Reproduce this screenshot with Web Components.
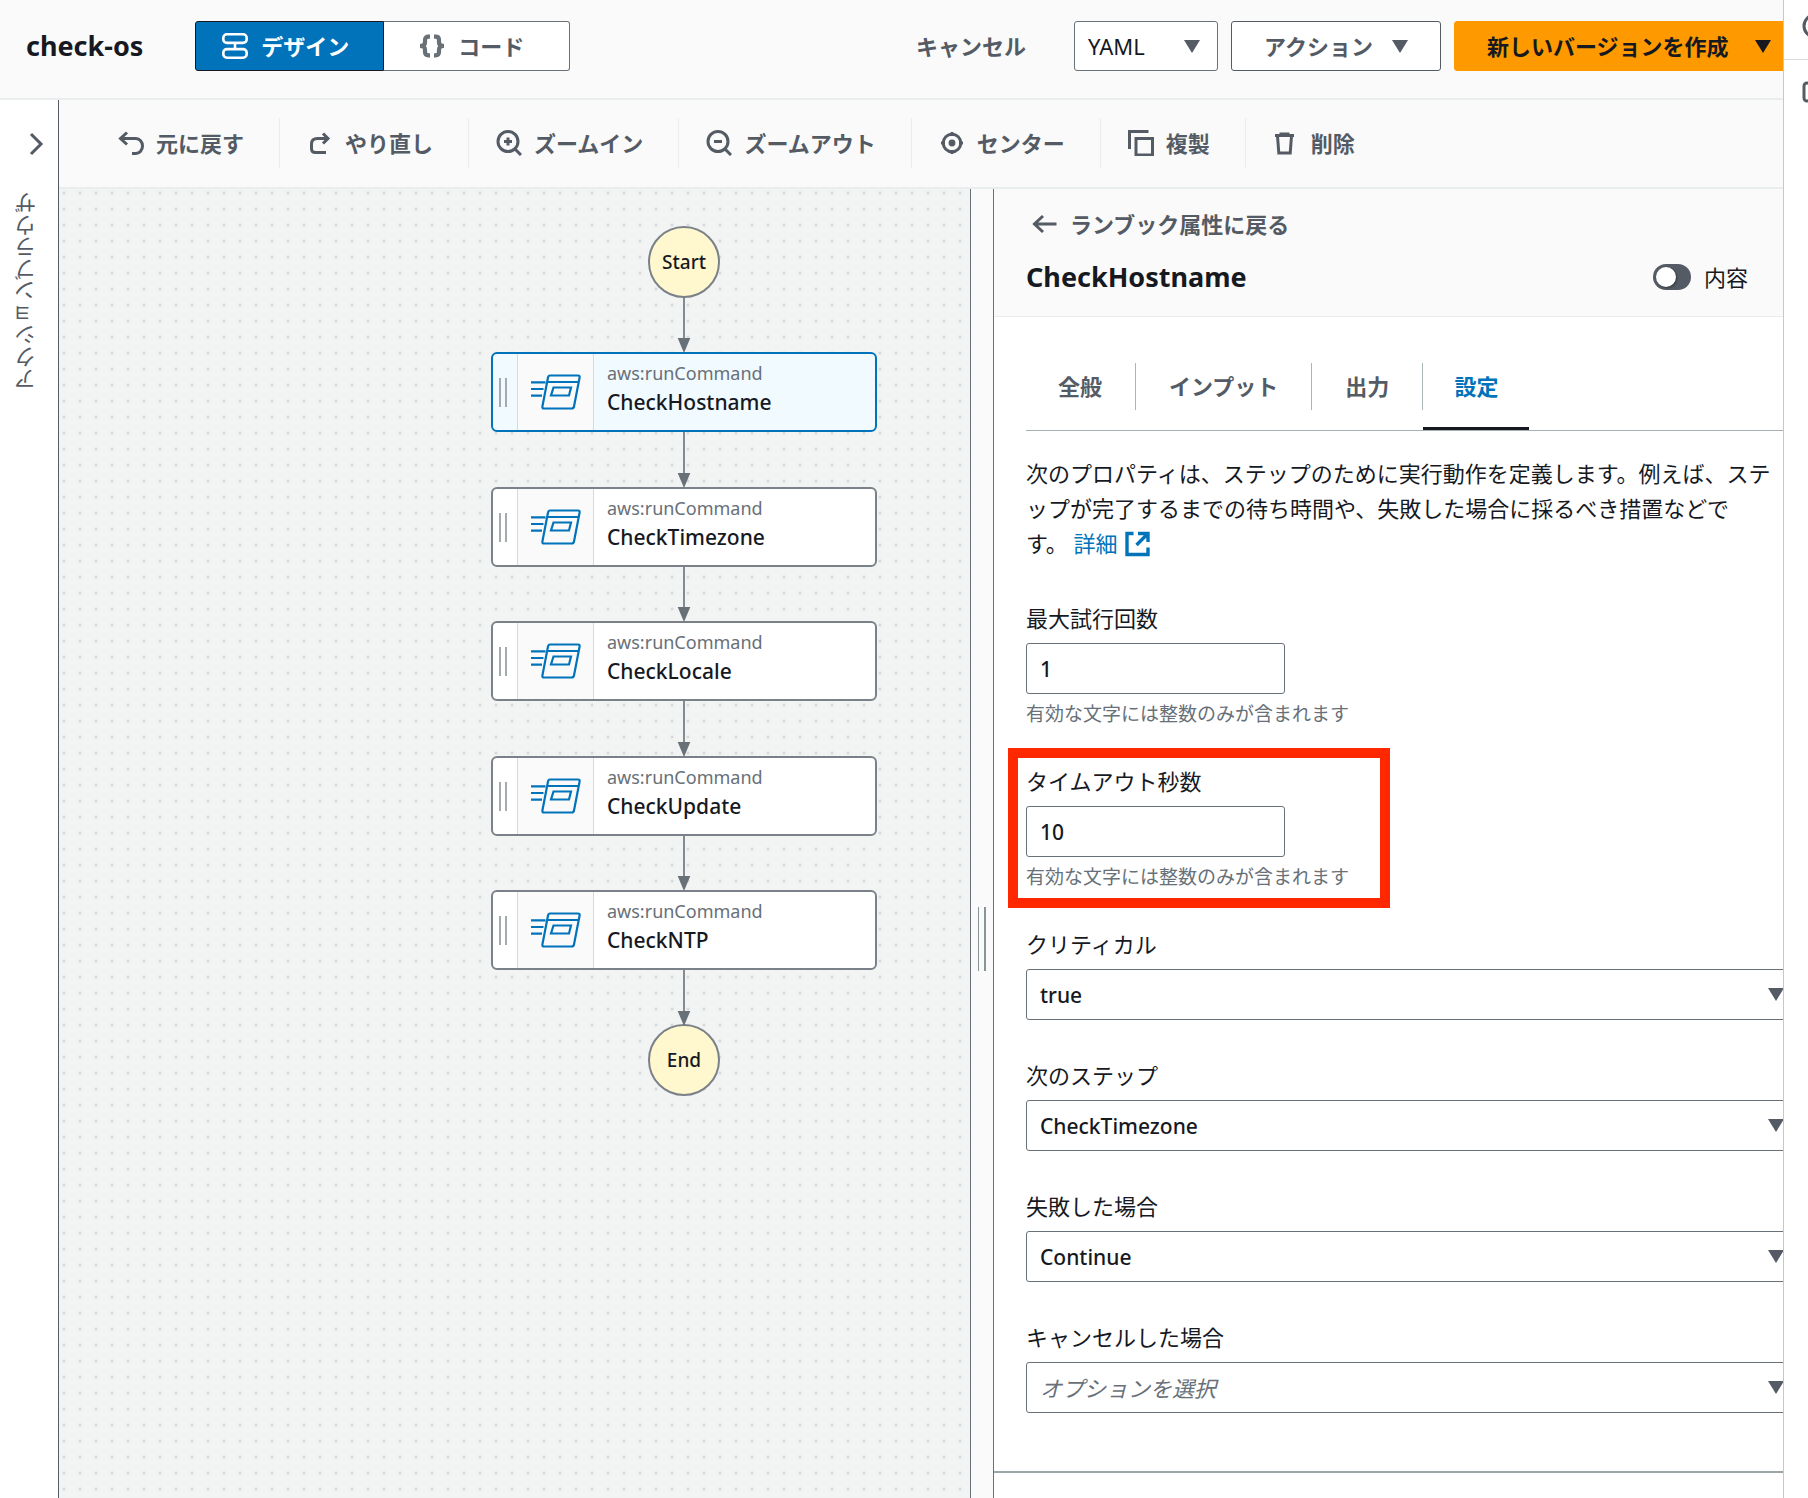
<!DOCTYPE html>
<html lang="ja">
<head>
<meta charset="utf-8">
<title>check-os</title>
<style>
  html, body { margin: 0; min-height: 100%; }
  body {
    --ink: #16191f; --muted: #545b64; --soft: #687078; --line: #eaeded; --blue: #0073bb; --wash: #fafafa;
    font-family: "Noto Sans", "Noto Sans CJK JP", sans-serif;
    font-size: 22px; color: var(--ink); background: #fff; line-break: normal;
  }
</style>
</head>
<body>
<runbook-designer></runbook-designer>

<script>
const ICONS = {
  design: '<g stroke-width="2.6"><rect x="1.3" y="1.3" width="23.400" height="8.600" rx="3.6"/><rect x="1.3" y="16.1" width="23.400" height="8.600" rx="3.6"/><path d="M13 9.900v6.2"/></g>',
  code: '<g stroke-width="4.200"><path d="M11 3.700H9.500Q6 3.700 6 7V9.500Q6 13 1 13Q6 13 6 16.500V19Q6 22.300 9.500 22.300H11M15 3.700H16.500Q20 3.700 20 7V9.500Q20 13 25 13Q20 13 20 16.500V19Q20 22.300 16.500 22.300H15"/></g>',
  undo: '<path d="M9 2.500L2.500 8.500L9 14.500M3 8.500H18A6.500 7.500 0 0 1 18 23.500H14"/>',
  redo: '<path d="M16 3.500L21 8.500L16 13.500M21 8.500H10.500Q4.500 8.500 4.500 14V18.500Q4.500 22.500 8.500 22.500H19"/>',
  zoomin: '<circle cx="12" cy="11.500" r="10"/><path d="M19 19l6 6M8 11.500h8M12 7.500v8"/>',
  zoomout: '<circle cx="12" cy="11.500" r="10"/><path d="M19 19l6 6M8 11.500h8"/>',
  center: '<circle cx="13" cy="13" r="8.800"/><circle cx="13" cy="13" r="3.400" fill="currentColor" stroke="none"/><path d="M13 2v4M13 20v4M2 13h4M20 13h4"/>',
  copy: '<path d="M20.500 1.500H1.500V19"/><rect x="8" y="8.500" width="16.500" height="16.500"/>',
  trash: '<path d="M2 5.500H21M8 5V4H15V5M4.500 6l1.300 17h11.400L18.500 6"/>',
  back: '<path d="M12 5L3.500 13L12 21M4 13H25.500"/>',
  chevron: '<path d="M8 3L18 13L8 23"/>',
  external: '<g stroke-width="3.400"><path d="M9.500 2.500H3V23.500H24V16.500M14 2.500H24V11M23.500 3L12.500 14"/></g>',
  info: '<circle cx="13" cy="13" r="11"/><path d="M13 12v7M13 7v2"/>',
  panel: '<rect x="2" y="4" width="22" height="18" rx="3"/>'
};

function define(name, html, setup) {
  const tpl = document.createElement('template');
  tpl.innerHTML = html;
  customElements.define(name, class extends HTMLElement {
    connectedCallback() {
      if (this.shadowRoot) return;
      const root = this.attachShadow({ mode: 'open' });
      root.append(tpl.content.cloneNode(true));
      if (setup) setup(this, root);
    }
  });
}

define('ui-icon', `
  <style>
    :host { display: block; flex: none; width: 26px; height: 26px; }
    svg { display: block; width: 26px; height: 26px; fill: none; stroke: currentColor; stroke-width: 3; }
  </style>
  <svg viewBox="0 0 26 26" aria-hidden="true"></svg>`,
  (host, root) => { root.querySelector('svg').innerHTML = ICONS[host.getAttribute('name')] || ''; });

define('ui-caret', `
  <style>
    :host { display: block; flex: none; width: 16px; height: 13px; pointer-events: none; }
    svg { display: block; fill: currentColor; }
  </style>
  <svg width="16" height="13" viewBox="0 0 16 13" aria-hidden="true"><path d="M0 0H16L8 13Z"/></svg>`);

define('ui-button', `
  <style>
    :host { display: block; }
    button {
      display: flex; align-items: center; justify-content: space-between; gap: 19px;
      box-sizing: border-box; width: 100%; height: 50px; padding: 0 32px;
      font: bold 22px/36px "Noto Sans", "Noto Sans CJK JP", sans-serif; color: var(--muted);
      background: #fff; border: 1px solid var(--muted); border-radius: 3px; white-space: nowrap;
    }
    :host([kind=primary]) button { color: var(--ink); background: #f90; border-color: #f90; }
    :host([kind=link]) button { padding: 0 34px; background: none; border-color: transparent; }
  </style>
  <button type="button"><slot></slot></button>`,
  (host, root) => {
    if (host.hasAttribute('menu')) root.querySelector('button').append(document.createElement('ui-caret'));
  });

define('mode-switch', `
  <style>
    :host { display: flex; }
    button {
      display: flex; align-items: center; gap: 13px; box-sizing: border-box; height: 50px;
      font: bold 22px/36px "Noto Sans", "Noto Sans CJK JP", sans-serif; white-space: nowrap;
    }
    .on { padding: 0 34px 0 26px; color: #fff; background: var(--blue); border: 1px solid var(--ink); border-radius: 3px 0 0 3px; }
    .off { padding: 0 45px 0 35px; color: var(--muted); background: #fff; border: 1px solid var(--soft); border-left: 0; border-radius: 0 3px 3px 0; }
    .off ui-icon { color: var(--soft); }
  </style>
  <button type="button" class="on" aria-pressed="true"><ui-icon name="design"></ui-icon>デザイン</button>
  <button type="button" class="off" aria-pressed="false"><ui-icon name="code"></ui-icon>コード</button>`);

define('page-header', `
  <style>
    :host { display: block; background: var(--wash); border-bottom: 2px solid var(--line); }
    header { display: flex; align-items: center; padding: 21px 4px 27px 26px; }
    h1 { margin: 0 52px 0 0; font-size: 27px; line-height: 36px; }
    .actions { display: flex; align-items: center; gap: 13px; margin-left: auto; }
    .format { display: grid; width: 144px; align-items: center; }
    .format > * { grid-area: 1 / 1; }
    .format ui-caret { justify-self: end; margin-right: 18px; color: var(--muted); }
    select {
      appearance: none; box-sizing: border-box; width: 100%; height: 50px; padding: 0 13px;
      font: 22px "Noto Sans", "Noto Sans CJK JP", sans-serif; color: var(--ink);
      background: #fff; border: 1px solid var(--soft); border-radius: 3px;
    }
    .create { width: 350px; }
  </style>
  <header>
    <h1>check-os</h1>
    <mode-switch></mode-switch>
    <div class="actions">
      <ui-button kind="link">キャンセル</ui-button>
      <div class="format"><select aria-label="形式"><option>YAML</option></select><ui-caret></ui-caret></div>
      <ui-button menu>アクション</ui-button>
      <ui-button class="create" kind="primary" menu>新しいバージョンを作成</ui-button>
    </div>
  </header>`);

define('action-rail', `
  <style>
    :host { display: flex; flex-direction: column; box-sizing: border-box; width: 59px; padding-top: 31px; background: #fff; border-right: 1px solid var(--muted); color: var(--muted); }
    button { align-self: flex-end; margin-right: 9px; padding: 0; border: 0; background: none; color: inherit; }
    span { align-self: flex-start; margin: 35px 0 0 8px; font-size: 22px; line-height: 36px; writing-mode: vertical-rl; transform: rotate(180deg); white-space: nowrap; }
  </style>
  <button type="button" aria-label="開く"><ui-icon name="chevron"></ui-icon></button>
  <span>アクションブラウザ</span>`);

define('tool-item', `
  <style>
    :host { display: block; border-right: 1px solid var(--line); }
    :host(:last-of-type) { border-right: 0; }
    button {
      display: flex; align-items: center; gap: 12px; height: 50px; padding: 0 35px 0 27px; border: 0; background: none;
      font: bold 22px/36px "Noto Sans", "Noto Sans CJK JP", sans-serif; color: var(--muted); white-space: nowrap;
    }
  </style>
  <button type="button"><ui-icon></ui-icon><slot></slot></button>`,
  (host, root) => {
    const icon = document.createElement('ui-icon');
    icon.setAttribute('name', host.getAttribute('icon'));
    root.querySelector('ui-icon').replaceWith(icon);
  });

define('tool-bar', `
  <style>
    :host { display: flex; padding: 18px 32px 19px; background: var(--wash); border-bottom: 2px solid var(--line); }
  </style>
  <tool-item icon="undo">元に戻す</tool-item>
  <tool-item icon="redo">やり直し</tool-item>
  <tool-item icon="zoomin">ズームイン</tool-item>
  <tool-item icon="zoomout">ズームアウト</tool-item>
  <tool-item icon="center">センター</tool-item>
  <tool-item icon="copy">複製</tool-item>
  <tool-item icon="trash">削除</tool-item>`);

define('flow-step', `
  <style>
    :host { display: flex; box-sizing: border-box; width: 386px; height: 80px; overflow: hidden; background: #fff; border: 2px solid #7a8188; border-radius: 6px; }
    :host([selected]) { background: #f1faff; border-color: var(--blue); }
    .grip { display: flex; align-items: center; justify-content: center; gap: 4px; box-sizing: border-box; width: 24px; padding-right: 5px; }
    .grip i { width: 2px; height: 29px; background: #a3abad; }
    .pic { display: flex; align-items: center; justify-content: center; box-sizing: border-box; width: 77px; background: var(--wash); border: solid #d5dbdb; border-width: 0 1px; }
    .pic svg { display: block; fill: none; stroke: var(--blue); stroke-width: 2.2; }
    .text { padding: 5px 0 0 13px; line-height: 29px; white-space: nowrap; }
    .kind { font-size: 18px; color: var(--soft); }
    .name { font-size: 21px; font-weight: 500; }
  </style>
  <div class="grip"><i></i><i></i></div>
  <div class="pic"><svg width="50" height="36" viewBox="0 0 50 36" aria-hidden="true">
    <path d="M19 1.500H47Q49 1.500 48.600 3.500L43 32.500Q42.600 34.500 40.600 34.500H13Q11 34.500 11.400 32.500L17 3.500Q17.400 1.500 19 1.500ZM16.500 8H47.500M22.500 13.500H40L38 21.500H20ZM0 8.300H14.500M0 15H12.500M0 21.700H11"/></svg></div>
  <div class="text"><div class="kind">aws:runCommand</div><div class="name"><slot></slot></div></div>`);

define('flow-end', `
  <style>
    :host { display: flex; align-items: center; justify-content: center; box-sizing: border-box; width: 72px; height: 72px; border: 2px solid #7a8188; border-radius: 50%; background: #fff7cd; font-size: 19px; font-weight: 500; }
  </style>
  <slot></slot>`);

/* Free canvas: the steps and the arrows between them are placed by their own coordinates. */
define('flow-canvas', `
  <style>
    :host {
      display: block; position: relative; min-height: 950px; overflow: hidden; background-color: #f2f3f3;
      background-image: radial-gradient(circle, #d5dbdb 1px, transparent 2px);
      background-size: 16px 16px; background-position: -3px -4px;
    }
    .edges, flow-step, flow-end { position: absolute; }
    .edges { left: 0; top: 0; }
  </style>
  <flow-end style="left:589px;top:37px">Start</flow-end>
  <flow-step selected style="left:432px;top:163px">CheckHostname</flow-step>
  <flow-step style="left:432px;top:298px">CheckTimezone</flow-step>
  <flow-step style="left:432px;top:432px">CheckLocale</flow-step>
  <flow-step style="left:432px;top:567px">CheckUpdate</flow-step>
  <flow-step style="left:432px;top:701px">CheckNTP</flow-step>
  <flow-end style="left:589px;top:835px">End</flow-end>
  <svg class="edges" width="900" height="950" aria-hidden="true"></svg>`,
  (host, root) => {
    const runs = [[109, 163], [243, 298], [378, 432], [512, 567], [647, 701], [781, 836]];
    root.querySelector('.edges').innerHTML = runs.map(([a, b]) =>
      `<path d="M625 ${a}V${b - 10}" stroke="#687078" stroke-width="1.600"/><path d="M618.700 ${b - 14}H631.300L625 ${b + 1}Z" fill="#687078"/>`).join('');
  });

define('split-handle', `
  <style>
    :host { display: flex; box-sizing: border-box; width: 24px; justify-content: center; gap: 5px; padding-top: 718px; background: var(--wash); border: solid var(--soft); border-width: 0 1px; }
    i { width: 1px; height: 64px; background: #879596; }
    i + i { width: 2px; }
  </style>
  <i></i><i></i>`);

define('panel-header', `
  <style>
    :host { display: flex; flex-direction: column; gap: 17px; padding: 17px 60px 21px 32px; background: var(--wash); border-bottom: 1px solid var(--line); }
    a { display: flex; align-items: center; gap: 13px; align-self: flex-start; padding-left: 5px; color: var(--muted); font-weight: bold; line-height: 36px; text-decoration: none; }
    .row { display: flex; align-items: center; justify-content: space-between; }
    h2 { margin: 0; font-size: 27px; line-height: 36px; }
    label { display: flex; align-items: center; gap: 13px; line-height: 36px; }
    input { appearance: none; display: flex; align-items: center; width: 38px; height: 26px; margin: 0; padding: 0 3px; box-sizing: border-box; border-radius: 13px; background: var(--muted); }
    input::before { content: ""; width: 20px; height: 20px; border-radius: 50%; background: #fff; box-shadow: 1px 1px 2px #0006; }
  </style>
  <a href="#"><ui-icon name="back"></ui-icon>ランブック属性に戻る</a>
  <div class="row">
    <h2>CheckHostname</h2>
    <label><input type="checkbox" role="switch">内容</label>
  </div>`);

define('panel-tabs', `
  <style>
    :host { display: flex; border-bottom: 1px solid #a7b0b2; }
    button { padding: 0 0 17px; border: 0; border-bottom: 3px solid transparent; background: none; color: var(--muted); font: bold 22px/47px "Noto Sans", "Noto Sans CJK JP", sans-serif; }
    span { display: block; padding: 0 33px 0 32px; border-right: 1px solid #aab7b8; }
    button + button span { padding-left: 33px; }
    .on { color: var(--blue); border-bottom-color: var(--ink); }
    button.on span { padding: 0 31px; border-right: 0; }
  </style>
  <button type="button"><span>全般</span></button>
  <button type="button"><span>インプット</span></button>
  <button type="button"><span>出力</span></button>
  <button type="button" class="on" aria-current="true"><span>設定</span></button>`);

const FIELD = `
    :host { display: block; position: relative; }
    label { display: block; margin-bottom: 9px; line-height: 31px; }
    input, select { appearance: none; display: block; box-sizing: border-box; height: 51px; padding: 0 13px; font: 500 21px "Noto Sans", "Noto Sans CJK JP", sans-serif; color: var(--ink); background: #fff; border: 1px solid var(--soft); border-radius: 3px; }`;

define('number-field', `
  <style>${FIELD}
    input { width: 259px; }
    p { margin: 8px 0 0; font-size: 19px; line-height: 24px; color: var(--soft); }
    /* Callout frame drawn over the field. */
    :host([marked])::after { content: ""; position: absolute; box-sizing: border-box; left: -18px; top: -18px; bottom: -19px; width: 382px; border: 10px solid #ff2800; pointer-events: none; }
  </style>
  <label for="f"><slot></slot></label>
  <input id="f" type="text" inputmode="numeric">
  <p>有効な文字には整数のみが含まれます</p>`,
  (host, root) => { root.querySelector('input').value = host.getAttribute('value'); });

define('select-field', `
  <style>${FIELD}
    div { display: grid; align-items: center; color: var(--muted); }
    div > * { grid-area: 1 / 1; }
    select { width: 100%; }
    ui-caret { justify-self: end; margin-right: 11px; }
    :host([empty]) select { font-size: 22px; font-weight: 400; font-style: italic; color: var(--soft); }
  </style>
  <label for="f"><slot></slot></label>
  <div><select id="f"><option></option></select><ui-caret></ui-caret></div>`,
  (host, root) => { root.querySelector('option').textContent = host.getAttribute('value'); });

define('step-panel', `
  <style>
    :host { display: block; width: 814px; background: #fff; }
    .body { padding: 46px 13px 58px 32px; border-bottom: 2px solid #9aa5a7; }
    p { margin: 25px 0 42px; padding-right: 18px; line-height: 35px; }
    .end { white-space: nowrap; }
    a { color: var(--blue); text-decoration: none; }
    a ui-icon { display: inline-block; margin-left: 6px; vertical-align: -5px; }
    form { display: flex; flex-direction: column; gap: 40px; }
  </style>
  <panel-header></panel-header>
  <div class="body">
    <panel-tabs></panel-tabs>
    <p>次のプロパティは、ステップのために実行動作を定義します。例えば、ステップが完了するまでの待ち時間や、失敗した場合に採るべき措置などで<span class="end">す。 <a href="#">詳細<ui-icon name="external"></ui-icon></a></span></p>
    <form>
      <number-field value="1">最大試行回数</number-field>
      <number-field value="10" marked>タイムアウト秒数</number-field>
      <select-field value="true">クリティカル</select-field>
      <select-field value="CheckTimezone">次のステップ</select-field>
      <select-field value="Continue">失敗した場合</select-field>
      <select-field value="オプションを選択" empty>キャンセルした場合</select-field>
    </form>
  </div>`);

define('side-drawer', `
  <style>
    :host { display: block; position: fixed; z-index: 2; top: 0; right: 0; bottom: 0; box-sizing: border-box; width: 25px; overflow: hidden; background: #fff; border-left: 1px solid #c3cacb; color: var(--muted); }
    button { display: block; box-sizing: border-box; width: 62px; height: 60px; padding: 0 0 7px 18px; border: 0; border-bottom: 1px solid #d5dbdb; background: none; color: inherit; }
    button + button { height: 64px; padding: 0 0 0 18px; border: 0; }
  </style>
  <button type="button" aria-label="情報"><ui-icon name="info"></ui-icon></button>
  <button type="button" aria-label="パネル"><ui-icon name="panel"></ui-icon></button>`);

define('runbook-designer', `
  <style>
    :host { display: flex; flex-direction: column; min-height: 100vh; }
    main { display: flex; flex: 1; }
    .work { display: flex; flex-direction: column; flex: 1; min-width: 0; }
    .split { display: grid; flex: 1; grid-template-columns: minmax(0, 1fr) auto auto; }
  </style>
  <page-header></page-header>
  <main>
    <action-rail></action-rail>
    <div class="work">
      <tool-bar></tool-bar>
      <div class="split">
        <flow-canvas></flow-canvas>
        <split-handle></split-handle>
        <step-panel></step-panel>
      </div>
    </div>
  </main>
  <side-drawer></side-drawer>`);
</script>
</body>
</html>
